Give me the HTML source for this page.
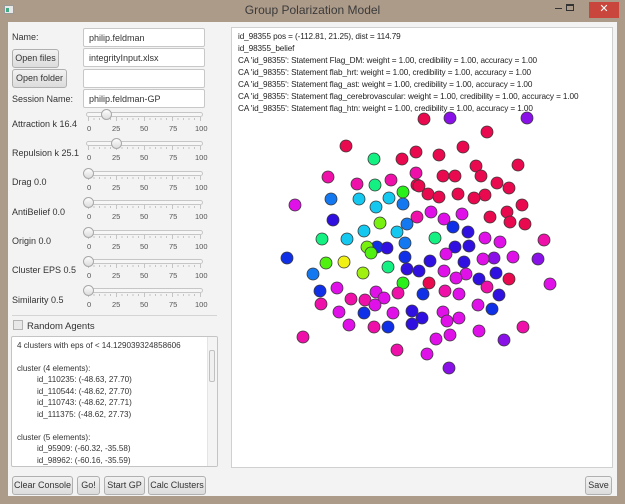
<!DOCTYPE html>
<html><head><meta charset="utf-8"><style>
*{margin:0;padding:0;box-sizing:border-box}
body{width:625px;height:504px;background:#ad9b8a;font-family:"Liberation Sans",sans-serif;font-size:9px;color:#222;position:relative;overflow:hidden}
.a{position:absolute}
.title{left:0;top:3px;width:625px;text-align:center;font-size:12px;color:#3a3a3a}
.client{left:8px;top:22px;width:609px;height:474px;background:#f3f3f3}
.lbl{position:absolute;left:12px;font-size:9px;color:#333}
.tf{position:absolute;left:83px;width:122px;height:19px;background:#fff;border:1px solid #c8c8c8;border-radius:2px;padding:4px 5px;font-size:9px;color:#333}
.btn{position:absolute;height:19px;border:1px solid #b0b0b0;border-radius:3px;background:linear-gradient(#f2f2f2,#dcdcdc);font-size:9px;color:#333;text-align:center;line-height:17px}
.track{position:absolute;left:86px;width:117px;height:5px;border:1px solid #c6c6c6;border-radius:3px;background:#f6f6f6}
.thumb{position:absolute;width:11px;height:11px;border-radius:50%;border:1px solid #a8a8a8;background:linear-gradient(#fdfdfd,#dcdcdc)}
.nums{position:absolute;left:84px;width:125px;font-size:7.5px;color:#555}
.nums span{position:absolute}
.plot{left:231px;top:27px;width:382px;height:441px;background:#fff;border:1px solid #d0d0d0}
.pt{position:absolute;left:6px;font-size:8.2px;color:#222;white-space:nowrap;letter-spacing:-0.1px}
.ta{left:11px;top:336px;width:207px;height:131px;background:#fff;border:1px solid #c4c4c4;border-radius:2px;overflow:hidden}
.ta div{position:absolute;left:5px;font-size:8.1px;color:#333;white-space:nowrap}
</style></head><body>
<div class="a" style="left:4px;top:5px;width:10px;height:9px;background:#e8e8e8;border:1px solid #999"><div class="a" style="left:1px;top:2px;width:3px;height:4px;background:#4a8"></div></div>
<div class="a title">Group Polarization Model</div>
<div class="a" style="left:555px;top:8px;width:7px;height:1px;background:#333"></div>
<div class="a" style="left:566px;top:4px;width:8px;height:7px;border:1px solid #333;border-top-width:2px"></div>
<div class="a" style="left:589px;top:2px;width:30px;height:16px;background:#c8463c;color:#fff;text-align:center;font-size:11px;line-height:15px">✕</div>
<div class="a client"></div>

<div class="lbl" style="top:32px">Name:</div>
<div class="tf" style="top:28px">philip.feldman</div>
<div class="btn" style="left:12px;top:49px;width:47px">Open files</div>
<div class="tf" style="top:48px">integrityInput.xlsx</div>
<div class="btn" style="left:12px;top:69px;width:55px">Open folder</div>
<div class="tf" style="top:69px"></div>
<div class="lbl" style="top:94px">Session Name:</div>
<div class="tf" style="top:89px">philip.feldman-GP</div>

<svg class="a" style="left:0;top:0" width="625" height="504">
<defs><g id="tk" stroke="#c4c4c4" stroke-width="1">
<path d="M88.5 0v4M116.5 0v4M144.5 0v4M172.5 0v4M200.5 0v4M94 1v2M99.5 1v2M105 1v2M110.5 1v2M122 1v2M127.5 1v2M133 1v2M138.5 1v2M150 1v2M155.5 1v2M161 1v2M166.5 1v2M178 1v2M183.5 1v2M189 1v2M194.5 1v2"/></g></defs>
<use href="#tk" y="117"/><use href="#tk" y="146"/><use href="#tk" y="176"/><use href="#tk" y="205"/><use href="#tk" y="235"/><use href="#tk" y="264"/><use href="#tk" y="293"/>
</svg>

<div class="lbl" style="top:119px">Attraction k 16.4</div>
<div class="track" style="top:112px"></div><div class="thumb" style="left:101px;top:109px"></div>
<div class="nums" style="top:124px"><span style="left:3px">0</span><span style="left:28px">25</span><span style="left:56px">50</span><span style="left:85px">75</span><span style="left:111px">100</span></div>

<div class="lbl" style="top:148px">Repulsion k 25.1</div>
<div class="track" style="top:141px"></div><div class="thumb" style="left:111px;top:138px"></div>
<div class="nums" style="top:153px"><span style="left:3px">0</span><span style="left:28px">25</span><span style="left:56px">50</span><span style="left:85px">75</span><span style="left:111px">100</span></div>

<div class="lbl" style="top:177px">Drag 0.0</div>
<div class="track" style="top:171px"></div><div class="thumb" style="left:83px;top:168px"></div>
<div class="nums" style="top:183px"><span style="left:3px">0</span><span style="left:28px">25</span><span style="left:56px">50</span><span style="left:85px">75</span><span style="left:111px">100</span></div>

<div class="lbl" style="top:207px">AntiBelief 0.0</div>
<div class="track" style="top:200px"></div><div class="thumb" style="left:83px;top:197px"></div>
<div class="nums" style="top:212px"><span style="left:3px">0</span><span style="left:28px">25</span><span style="left:56px">50</span><span style="left:85px">75</span><span style="left:111px">100</span></div>

<div class="lbl" style="top:236px">Origin 0.0</div>
<div class="track" style="top:230px"></div><div class="thumb" style="left:83px;top:227px"></div>
<div class="nums" style="top:242px"><span style="left:3px">0</span><span style="left:28px">25</span><span style="left:56px">50</span><span style="left:85px">75</span><span style="left:111px">100</span></div>

<div class="lbl" style="top:265px">Cluster EPS 0.5</div>
<div class="track" style="top:259px"></div><div class="thumb" style="left:83px;top:256px"></div>
<div class="nums" style="top:271px"><span style="left:3px">0</span><span style="left:28px">25</span><span style="left:56px">50</span><span style="left:85px">75</span><span style="left:111px">100</span></div>

<div class="lbl" style="top:295px">Similarity 0.5</div>
<div class="track" style="top:288px"></div><div class="thumb" style="left:83px;top:285px"></div>
<div class="nums" style="top:300px"><span style="left:3px">0</span><span style="left:28px">25</span><span style="left:56px">50</span><span style="left:85px">75</span><span style="left:111px">100</span></div>

<div class="a" style="left:12px;top:315px;width:205px;height:1px;background:#d4d4d4"></div>
<div class="a" style="left:13px;top:320px;width:10px;height:10px;border:1px solid #b4b4b4;background:#e8e8e8"></div>
<div class="lbl" style="left:27px;top:321px;font-size:9.5px">Random Agents</div>

<div class="a ta">
<div style="top:4px">4 clusters with eps of &lt; 14.129039324858606</div>
<div style="top:27px">cluster (4 elements):</div>
<div style="top:38px;left:25px">id_110235: (-48.63, 27.70)</div>
<div style="top:50px;left:25px">id_110544: (-48.62, 27.70)</div>
<div style="top:61px;left:25px">id_110743: (-48.62, 27.71)</div>
<div style="top:73px;left:25px">id_111375: (-48.62, 27.73)</div>
<div style="top:96px">cluster (5 elements):</div>
<div style="top:107px;left:25px">id_95909: (-60.32, -35.58)</div>
<div style="top:119px;left:25px">id_98962: (-60.16, -35.59)</div>
<div class="a" style="left:195px;top:0;width:10px;height:129px;background:#f4f4f4;border-left:1px solid #e4e4e4"></div>
<div class="a" style="left:197px;top:13px;width:6px;height:32px;background:#f0f0f0;border:1px solid #c0c0c0;border-radius:2px"></div>
</div>

<div class="btn" style="left:12px;top:476px;width:61px">Clear Console</div>
<div class="btn" style="left:77px;top:476px;width:23px">Go!</div>
<div class="btn" style="left:104px;top:476px;width:41px">Start GP</div>
<div class="btn" style="left:148px;top:476px;width:58px">Calc Clusters</div>
<div class="btn" style="left:585px;top:476px;width:27px">Save</div>

<div class="a plot">
<div class="pt" style="top:4px">id_98355 pos = (-112.81, 21.25), dist = 114.79</div>
<div class="pt" style="top:16px">id_98355_belief</div>
<div class="pt" style="top:28px">CA 'id_98355': Statement Flag_DM: weight = 1.00, credibility = 1.00, accuracy = 1.00</div>
<div class="pt" style="top:40px">CA 'id_98355': Statement flab_hrt: weight = 1.00, credibility = 1.00, accuracy = 1.00</div>
<div class="pt" style="top:52px">CA 'id_98355': Statement flag_ast: weight = 1.00, credibility = 1.00, accuracy = 1.00</div>
<div class="pt" style="top:64px">CA 'id_98355': Statement flag_cerebrovascular: weight = 1.00, credibility = 1.00, accuracy = 1.00</div>
<div class="pt" style="top:76px">CA 'id_98355': Statement flag_htn: weight = 1.00, credibility = 1.00, accuracy = 1.00</div>
</div>

<svg class="a" style="left:0;top:0" width="625" height="504">
<g stroke="#3a3a3a" stroke-width="0.8">
<circle cx="424" cy="119" r="6" fill="#e8094e"/><circle cx="450" cy="118" r="6" fill="#8a10e8"/><circle cx="527" cy="118" r="6" fill="#8a10e8"/>
<circle cx="487" cy="132" r="6" fill="#e8094e"/><circle cx="346" cy="146" r="6" fill="#e8094e"/><circle cx="463" cy="147" r="6" fill="#e8094e"/>
<circle cx="416" cy="152" r="6" fill="#e8094e"/><circle cx="439" cy="155" r="6" fill="#e8094e"/><circle cx="374" cy="159" r="6" fill="#14f082"/>
<circle cx="402" cy="159" r="6" fill="#e8094e"/><circle cx="518" cy="165" r="6" fill="#e8094e"/><circle cx="476" cy="166" r="6" fill="#e8094e"/>
<circle cx="416" cy="173" r="6" fill="#ee10a8"/><circle cx="328" cy="177" r="6" fill="#ee10a8"/><circle cx="443" cy="176" r="6" fill="#e8094e"/>
<circle cx="455" cy="176" r="6" fill="#e8094e"/><circle cx="481" cy="176" r="6" fill="#e8094e"/><circle cx="391" cy="180" r="6" fill="#ee10a8"/>
<circle cx="497" cy="183" r="6" fill="#e8094e"/><circle cx="357" cy="184" r="6" fill="#ee10a8"/><circle cx="375" cy="185" r="6" fill="#14f082"/>
<circle cx="417" cy="185" r="6" fill="#e8094e"/><circle cx="419" cy="186" r="6" fill="#e8094e"/><circle cx="509" cy="188" r="6" fill="#e8094e"/>
<circle cx="403" cy="192" r="6" fill="#28f018"/><circle cx="428" cy="194" r="6" fill="#e8094e"/><circle cx="458" cy="194" r="6" fill="#e8094e"/>
<circle cx="485" cy="195" r="6" fill="#e8094e"/><circle cx="439" cy="197" r="6" fill="#e8094e"/><circle cx="474" cy="198" r="6" fill="#e8094e"/>
<circle cx="389" cy="198" r="6" fill="#14c8f0"/><circle cx="331" cy="199" r="6" fill="#1478f0"/><circle cx="359" cy="199" r="6" fill="#14c8f0"/>
<circle cx="403" cy="204" r="6" fill="#1478f0"/><circle cx="295" cy="205" r="6" fill="#e010e8"/><circle cx="522" cy="205" r="6" fill="#e8094e"/>
<circle cx="376" cy="207" r="6" fill="#14c8f0"/><circle cx="431" cy="212" r="6" fill="#e010e8"/><circle cx="507" cy="212" r="6" fill="#e8094e"/>
<circle cx="462" cy="214" r="6" fill="#e010e8"/><circle cx="417" cy="217" r="6" fill="#ee10a8"/><circle cx="490" cy="217" r="6" fill="#e8094e"/>
<circle cx="444" cy="219" r="6" fill="#e010e8"/><circle cx="333" cy="220" r="6" fill="#3010e0"/><circle cx="510" cy="222" r="6" fill="#e8094e"/>
<circle cx="380" cy="223" r="6" fill="#78f010"/><circle cx="407" cy="224" r="6" fill="#1478f0"/><circle cx="525" cy="224" r="6" fill="#e8094e"/>
<circle cx="453" cy="227" r="6" fill="#1030e8"/><circle cx="364" cy="231" r="6" fill="#14c8f0"/><circle cx="397" cy="232" r="6" fill="#14c8f0"/>
<circle cx="468" cy="232" r="6" fill="#3010e0"/><circle cx="485" cy="238" r="6" fill="#e010e8"/><circle cx="435" cy="238" r="6" fill="#14f082"/>
<circle cx="322" cy="239" r="6" fill="#14f082"/><circle cx="347" cy="239" r="6" fill="#14c8f0"/><circle cx="544" cy="240" r="6" fill="#ee10a8"/>
<circle cx="500" cy="242" r="6" fill="#e010e8"/><circle cx="405" cy="243" r="6" fill="#1478f0"/><circle cx="455" cy="247" r="6" fill="#3010e0"/>
<circle cx="469" cy="246" r="6" fill="#3010e0"/><circle cx="377" cy="247" r="6" fill="#1030e8"/><circle cx="387" cy="248" r="6" fill="#3010e0"/>
<circle cx="367" cy="247" r="6" fill="#78f010"/><circle cx="371" cy="253" r="6" fill="#50f010"/><circle cx="446" cy="254" r="6" fill="#e010e8"/>
<circle cx="405" cy="257" r="6" fill="#1030e8"/><circle cx="513" cy="257" r="6" fill="#e010e8"/><circle cx="494" cy="258" r="6" fill="#8a10e8"/>
<circle cx="287" cy="258" r="6" fill="#1030e8"/><circle cx="483" cy="259" r="6" fill="#e010e8"/><circle cx="538" cy="259" r="6" fill="#8a10e8"/>
<circle cx="430" cy="261" r="6" fill="#3010e0"/><circle cx="464" cy="262" r="6" fill="#3010e0"/><circle cx="344" cy="262" r="6" fill="#f0f014"/>
<circle cx="326" cy="263" r="6" fill="#50f010"/><circle cx="388" cy="267" r="6" fill="#14f082"/><circle cx="407" cy="269" r="6" fill="#3010e0"/>
<circle cx="419" cy="271" r="6" fill="#3010e0"/><circle cx="444" cy="271" r="6" fill="#e010e8"/><circle cx="363" cy="273" r="6" fill="#a0f010"/>
<circle cx="496" cy="273" r="6" fill="#3010e0"/><circle cx="313" cy="274" r="6" fill="#1478f0"/><circle cx="466" cy="274" r="6" fill="#e010e8"/>
<circle cx="456" cy="278" r="6" fill="#e010e8"/><circle cx="479" cy="279" r="6" fill="#3010e0"/><circle cx="509" cy="279" r="6" fill="#e8094e"/>
<circle cx="403" cy="283" r="6" fill="#28f018"/><circle cx="429" cy="283" r="6" fill="#e8094e"/><circle cx="550" cy="284" r="6" fill="#e010e8"/>
<circle cx="487" cy="287" r="6" fill="#ee10a8"/><circle cx="337" cy="288" r="6" fill="#e010e8"/><circle cx="320" cy="291" r="6" fill="#1030e8"/>
<circle cx="445" cy="291" r="6" fill="#ee10a8"/><circle cx="376" cy="292" r="6" fill="#e010e8"/><circle cx="398" cy="293" r="6" fill="#ee10a8"/>
<circle cx="423" cy="294" r="6" fill="#1030e8"/><circle cx="459" cy="294" r="6" fill="#e010e8"/><circle cx="499" cy="295" r="6" fill="#3010e0"/>
<circle cx="384" cy="298" r="6" fill="#e010e8"/><circle cx="351" cy="299" r="6" fill="#ee10a8"/><circle cx="365" cy="300" r="6" fill="#ee10a8"/>
<circle cx="321" cy="304" r="6" fill="#ee10a8"/><circle cx="375" cy="305" r="6" fill="#e010e8"/><circle cx="478" cy="305" r="6" fill="#e010e8"/>
<circle cx="492" cy="309" r="6" fill="#1030e8"/><circle cx="412" cy="311" r="6" fill="#3010e0"/><circle cx="443" cy="312" r="6" fill="#e010e8"/>
<circle cx="339" cy="312" r="6" fill="#e010e8"/><circle cx="364" cy="313" r="6" fill="#1030e8"/><circle cx="393" cy="313" r="6" fill="#e010e8"/>
<circle cx="422" cy="318" r="6" fill="#3010e0"/><circle cx="459" cy="318" r="6" fill="#e010e8"/><circle cx="447" cy="321" r="6" fill="#e010e8"/>
<circle cx="412" cy="324" r="6" fill="#3010e0"/><circle cx="349" cy="325" r="6" fill="#e010e8"/>
<circle cx="374" cy="327" r="6" fill="#ee10a8"/><circle cx="388" cy="327" r="6" fill="#1030e8"/><circle cx="523" cy="327" r="6" fill="#ee10a8"/>
<circle cx="479" cy="331" r="6" fill="#e010e8"/><circle cx="450" cy="335" r="6" fill="#e010e8"/><circle cx="303" cy="337" r="6" fill="#ee10a8"/>
<circle cx="436" cy="339" r="6" fill="#e010e8"/><circle cx="504" cy="340" r="6" fill="#8a10e8"/><circle cx="397" cy="350" r="6" fill="#ee10a8"/>
<circle cx="427" cy="354" r="6" fill="#e010e8"/><circle cx="449" cy="368" r="6" fill="#8a10e8"/>
</g></svg>
</body></html>
